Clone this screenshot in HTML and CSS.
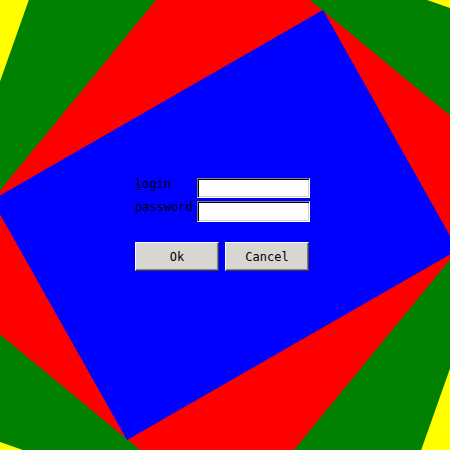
FILE: index.html
```html
<!DOCTYPE html>
<html>
<head>
<meta charset="utf-8">
<link rel="stylesheet" href="styles.css">
</head>
<body>
<div class="stage">
  <svg class="backdrop" width="450" height="450" viewBox="0 0 450 450">
    <polygon fill="#008000" points="73.1,-125.2 563.3,48.2 376.9,575.2 -113.3,401.8"/>
    <polygon fill="#ff0000" points="218.1,-75.75 520.4,173.65 231.9,525.75 -70.4,276.35"/>
    <polygon fill="#0000ff" points="323,10 458,250 127,440 -8,200"/>
  </svg>
  <form class="login-form">
    <div class="fields">
      <label class="field-label" for="login"><u>l</u>ogin</label>
      <input class="field-input" id="login" type="text">
      <label class="field-label" for="password">password</label>
      <input class="field-input tall" id="password" type="password">
    </div>
    <div class="buttons">
      <button type="button" class="btn">Ok</button>
      <button type="button" class="btn">Cancel</button>
    </div>
  </form>
</div>
</body>
</html>
```
FILE: styles.css
```css
html, body {
  margin: 0;
  padding: 0;
}
body {
  background: #ffff00;
  font-family: "DejaVu Sans Mono", "Liberation Mono", monospace;
  font-size: 12px;
  color: #000;
}
.stage {
  position: relative;
  box-sizing: border-box;
  width: 450px;
  height: 450px;
  overflow: hidden;
  background: #ffff00;
  padding: 178px 0 0 135px;
}
.backdrop {
  position: absolute;
  left: 0;
  top: 0;
  display: block;
}
.login-form {
  position: relative;
  width: 175px;
  margin: 0;
  display: flex;
  flex-direction: column;
}
.fields {
  display: grid;
  grid-template-columns: 62px 113px;
  grid-template-rows: 20px 21px;
  row-gap: 3px;
}
.field-label {
  align-self: start;
  line-height: 14px;
  margin-top: -1px;
  white-space: nowrap;
}
.field-label u {
  text-decoration: underline;
  text-underline-offset: 1px;
}
.field-input {
  box-sizing: border-box;
  width: 113px;
  height: 20px;
  margin: 0;
  padding: 0 3px;
  background: #fff;
  border: 1px solid;
  border-color: #808080 #ffffff #ffffff #808080;
  box-shadow: inset 1px 1px 0 #000, inset -1px -1px 0 #d4d0c8;
  font: inherit;
  outline: none;
}
.field-input.tall {
  height: 21px;
}
.buttons {
  display: flex;
  gap: 6px;
  margin-top: 20px;
}
.btn {
  box-sizing: border-box;
  width: 84px;
  height: 29px;
  margin: 0;
  padding: 0;
  background: #d8d6d1;
  border: 1px solid;
  border-color: #ffffff #404040 #404040 #ffffff;
  box-shadow: inset -1px -1px 0 #808080;
  font: inherit;
  color: #000;
}
```
